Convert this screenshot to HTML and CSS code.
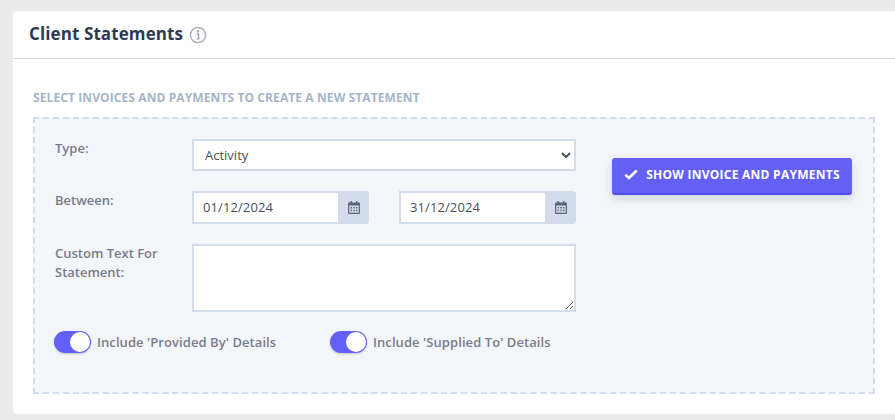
FILE: index.html
```
<!DOCTYPE html>
<html lang="en">
<head>
<meta charset="utf-8">
<title>Client Statements</title>
<link rel="stylesheet" href="styles.css">
</head>
<body>
<section class="card">
  <header class="card-header">
    <h1 class="card-title">Client Statements</h1>
    <svg class="info-icon" width="18" height="18" viewBox="0 0 18 18" aria-hidden="true">
      <circle cx="9" cy="9" r="7.6" fill="none" stroke="#b1b3bb" stroke-width="1.5"/>
      <circle cx="9" cy="5.4" r="1.2" fill="#a5a7b0"/>
      <path d="M7.7 8h1.9v4.6M7.600 12.800h3" fill="none" stroke="#a5a7b0" stroke-width="1.4"/>
    </svg>
  </header>
  <div class="card-body">
    <h2 class="section-title">SELECT INVOICES AND PAYMENTS TO CREATE A NEW STATEMENT</h2>
    <div class="dash-box">
      <div class="form-area">
        <div class="form-col">
          <div class="form-row row-type">
            <label class="field-label">Type:</label>
            <select class="field select"><option>Activity</option></select>
          </div>
          <div class="form-row row-between">
            <label class="field-label">Between:</label>
            <div class="date-pair">
              <div class="date-group">
                <input class="date-input" type="text" value="01/12/2024">
                <span class="date-addon">
                  <svg width="12" height="13" viewBox="0 0 12 13" aria-hidden="true"><path fill-rule="evenodd" fill="#56657a" d="M2.500 0h1.400v1.500h4.200V0h1.400v1.500H11a1 1 0 0 1 1 1V12a1 1 0 0 1-1 1H1a1 1 0 0 1-1-1V2.500a1 1 0 0 1 1-1h1.500zM1.200 4.500V11.800h9.600V4.500z"/><path fill="#56657a" d="M2.500 6h1.500v1.400H2.500zM5.250 6h1.500v1.400h-1.500zM8 6h1.500v1.400H8zM2.500 8.800h1.500v1.400H2.500zM5.250 8.800h1.500v1.400h-1.500zM8 8.800h1.500v1.400H8z"/></svg>
                </span>
              </div>
              <div class="date-group">
                <input class="date-input" type="text" value="31/12/2024">
                <span class="date-addon">
                  <svg width="12" height="13" viewBox="0 0 12 13" aria-hidden="true"><path fill-rule="evenodd" fill="#56657a" d="M2.500 0h1.400v1.500h4.200V0h1.400v1.500H11a1 1 0 0 1 1 1V12a1 1 0 0 1-1 1H1a1 1 0 0 1-1-1V2.500a1 1 0 0 1 1-1h1.500zM1.200 4.500V11.800h9.600V4.500z"/><path fill="#56657a" d="M2.500 6h1.500v1.400H2.500zM5.250 6h1.500v1.400h-1.500zM8 6h1.500v1.400H8zM2.500 8.800h1.500v1.400H2.500zM5.250 8.800h1.500v1.400h-1.500zM8 8.800h1.500v1.400H8z"/></svg>
                </span>
              </div>
            </div>
          </div>
          <div class="form-row row-text">
            <label class="field-label">Custom Text For Statement:</label>
            <textarea class="field textarea"></textarea>
          </div>
          <div class="toggle-row">
            <div class="toggle-item">
              <span class="toggle"><span class="toggle-knob"></span></span>
              <span class="toggle-label">Include 'Provided By' Details</span>
            </div>
            <div class="toggle-item">
              <span class="toggle"><span class="toggle-knob"></span></span>
              <span class="toggle-label">Include 'Supplied To' Details</span>
            </div>
          </div>
        </div>
        <div class="action-col">
          <button class="primary-btn" type="button">
            <svg width="14" height="11" viewBox="0 0 14 11" aria-hidden="true"><path d="M1.300 5.700 5 9 12.700 1.500" fill="none" stroke="#fff" stroke-width="2.600"/></svg>
            <span>SHOW INVOICE AND PAYMENTS</span>
          </button>
        </div>
      </div>
    </div>
  </div>
</section>
</body>
</html>
```
FILE: styles.css
```
* { box-sizing: border-box; }
html, body { height: 100%; }
body {
  margin: 0;
  padding: 11px 0 0 13px;
  background: #ebebeb;
  font-family: "Open Sans", sans-serif;
  overflow: hidden;
}
.card {
  background: #fff;
  border-radius: 4px 0 0 4px;
  height: 403px;
}
.card-header {
  height: 48px;
  border-bottom: 1px solid #d8d8dc;
  padding: 0 0 0 16px;
  display: flex;
  align-items: center;
  gap: 6px;
}
.card-title {
  margin: 0 0 2px;
  font-size: 17px;
  letter-spacing: .1px;
  font-weight: 700;
  color: #2f3b50;
  line-height: 44px;
}
.info-icon { margin-top: 1px; }
.card-body { padding: 32px 20px 0 20px; }
.section-title {
  margin: 0 0 12px;
  font-size: 12px;
  letter-spacing: .1px;
  font-weight: 700;
  line-height: 14px;
  color: #a6b5c8;
}
.dash-box {
  height: 277px;
  background: #f3f6fb;
  border: 2px dashed #d3dcea;
  padding: 20px 20px 0;
}
.form-area { display: flex; }
.form-col { width: 521px; flex: none; }
.form-row { display: flex; }
.field-label {
  width: 137px;
  flex: none;
  font-size: 13px;
  font-weight: 600;
  line-height: 19px;
  color: #7a7c88;
}
.row-type { height: 32px; margin-bottom: 20px; }
.row-between { height: 33px; margin-bottom: 20px; }
.row-text { height: 68px; margin-bottom: 19px; }
.row-text .field-label { padding-right: 20px; }
.field {
  flex: 1;
  min-width: 0;
  border: 2px solid #d3dcea;
  background: #fff;
  font-family: "Open Sans", sans-serif;
  font-size: 13px;
  color: #4a4f5c;
  border-radius: 0;
  outline: none;
}
.select { height: 32px; padding-left: 7px; }
.textarea { height: 68px; display: block; resize: both; }
.date-pair { flex: 1; display: flex; justify-content: space-between; }
.date-group { width: 177px; height: 33px; display: flex; }
.date-input {
  width: 146px;
  height: 33px;
  border: 2px solid #d3dcea;
  border-right: 0;
  background: #fff;
  padding: 0 0 2px 9px;
  font-family: "Open Sans", sans-serif;
  font-size: 13px;
  letter-spacing: .1px;
  color: #4a4f5c;
  border-radius: 0;
  outline: none;
}
.date-addon {
  flex: 1;
  background: #d3dcea;
  border-radius: 0 3px 3px 0;
  display: flex;
  align-items: center;
  justify-content: center;
}
.toggle-row { display: flex; margin-left: -1px; }
.toggle-item { width: 276px; flex: none; display: flex; align-items: center; gap: 6px; }
.toggle {
  width: 37px;
  height: 22px;
  border-radius: 11px;
  background: #6460f6;
  display: flex;
  justify-content: flex-end;
  align-items: center;
  padding-right: 1px;
  box-shadow: 0 1px 2px rgba(60, 60, 90, .25);
  flex: none;
}
.toggle-knob { width: 20px; height: 20px; border-radius: 50%; background: #fff; }
.toggle-label { font-size: 13px; letter-spacing: .07px; font-weight: 600; color: #7a7c88; line-height: 22px; }
.action-col { padding: 19px 0 0 36px; }
.primary-btn {
  width: 240px;
  height: 37px;
  border: 0;
  border-bottom: 2px solid #4f4bec;
  border-radius: 3px;
  background: #6460f6;
  color: #fff;
  font-family: "Open Sans", sans-serif;
  font-size: 12px;
  letter-spacing: .25px;
  font-weight: 700;
  display: flex;
  align-items: center;
  justify-content: center;
  gap: 8px;
  padding: 0 0 2px;
  box-shadow: 0 4px 10px rgba(70, 80, 120, .2);
}
```
